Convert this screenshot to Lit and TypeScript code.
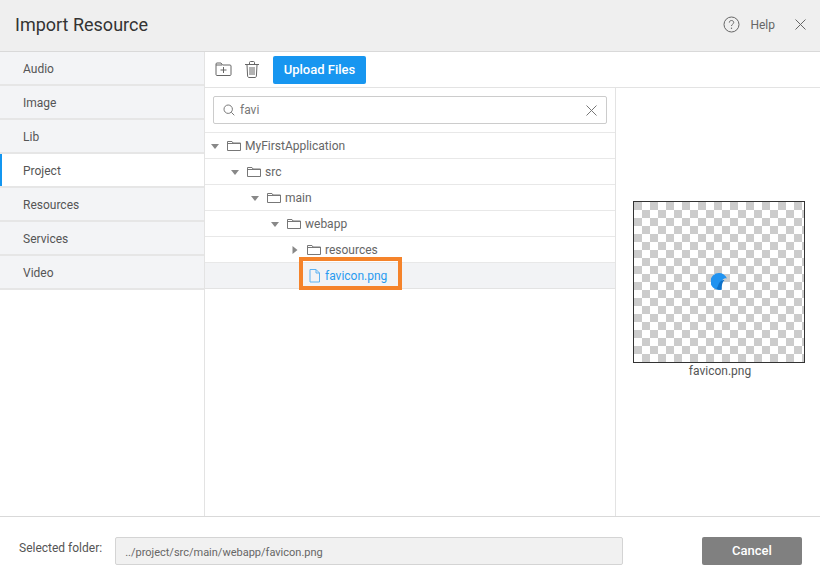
import { LitElement, html, css, svg } from 'lit'
import { customElement } from 'lit/decorators.js'

const TABS = ['Audio', 'Image', 'Lib', 'Project', 'Resources', 'Services', 'Video']

const TREE = [
  { label: 'MyFirstApplication', depth: 0, arrow: 'down' },
  { label: 'src', depth: 1, arrow: 'down' },
  { label: 'main', depth: 2, arrow: 'down' },
  { label: 'webapp', depth: 3, arrow: 'down' },
  { label: 'resources', depth: 4, arrow: 'right' },
]

const folderIcon = svg`<path d="M.5 10.500V1.500h4.500l1 1.500h7.500v7.500zM.5 3.500h13" fill="none" stroke="#777" stroke-width="1"/>`

@customElement('app-root')
export class AppRoot extends LitElement {
  static styles = css`
    :host {
      display: block;
      width: 820px;
      height: 580px;
      background: white;
      font-family: Roboto, sans-serif;
      color: #555;
      overflow: hidden;
    }

    .dialog {
      height: 580px;
      display: flex;
      flex-direction: column;
    }

    header {
      height: 49px;
      flex: none;
      background: #efefef;
      border-bottom: 1px solid #d9d9d9;
      display: flex;
      align-items: center;
      padding: 0 14px 2px 15px;
    }

    h1 {
      margin: 0;
      flex: 1;
      font-size: 18px;
      font-weight: 400;
      color: #333;
    }

    .help {
      font-size: 12px;
      color: #666;
      margin: 0 20px 0 10px;
    }

    svg {
      display: block;
      flex: none;
    }

    .body {
      flex: 1;
      display: flex;
      min-height: 0;
    }

    .side {
      width: 204px;
      flex: none;
      border-right: 1px solid #e3e3e3;
    }

    .tab {
      height: 32px;
      line-height: 34px;
      padding-left: 23px;
      font-size: 12px;
      color: #555;
      background: #f3f4f6;
      border-bottom: 2px solid #e6e6e6;
    }

    .tab.active {
      background: white;
      box-shadow: inset 2px 0 0 #1396f0;
    }

    .main {
      flex: 1;
      display: flex;
      flex-direction: column;
      min-width: 0;
    }

    .toolbar {
      height: 35px;
      flex: none;
      border-bottom: 1px solid #e3e3e3;
      display: flex;
      align-items: center;
      padding-left: 10px;
      gap: 13px;
    }

    .upload {
      width: 93px;
      height: 28px;
      margin-left: 1px;
      border: none;
      border-radius: 2px;
      background: #1796f0;
      color: white;
      font: 500 13px Roboto, sans-serif;
      padding: 0;
    }

    .panes {
      flex: 1;
      display: flex;
      min-height: 0;
    }

    .left {
      width: 410px;
      flex: none;
      border-right: 1px solid #e3e3e3;
    }

    .search {
      margin: 8px;
      height: 26px;
      border: 1px solid #ccc;
      border-radius: 2px;
      display: flex;
      align-items: center;
      padding: 0 9px;
      gap: 5px;
      font-size: 12px;
      color: #777;
    }

    .search span {
      flex: 1;
    }

    .row {
      position: relative;
      height: 25px;
      border-top: 1px solid #e8e8e8;
      display: flex;
      align-items: center;
      font-size: 12px;
      color: #666;
    }

    .row .arrow {
      margin-right: 8px;
    }

    .row .name {
      margin-left: 4px;
    }

    .row.selected {
      background: #f2f3f5;
      color: #2a9bf0;
      border-bottom: 1px solid #e3e3e3;
    }

    .row.selected .name {
      margin-left: 5px;
    }

    .marker {
      position: absolute;
      left: 94px;
      top: -6px;
      width: 95px;
      height: 25px;
      border: 4px solid #f5832a;
    }

    .preview {
      flex: 1;
      display: flex;
      flex-direction: column;
      align-items: center;
      padding: 113px 0 0 2px;
    }

    .image {
      width: 170px;
      height: 160px;
      border: 1px solid #333;
      display: flex;
      align-items: center;
      justify-content: center;
      background-color: white;
      background-image: conic-gradient(white 25%, #ccc 0 50%, white 0 75%, #ccc 0);
      background-size: 16px 16px;
    }

    .favicon {
      margin-top: -2px;
    }

    .caption {
      margin-top: 1px;
      padding-left: 2px;
      font-size: 12px;
      color: #555;
    }

    footer {
      height: 59px;
      flex: none;
      border-top: 1px solid #d9d9d9;
      display: flex;
      align-items: center;
      padding: 4px 18px 0 19px;
      font-size: 12px;
    }

    .path-label {
      color: #555;
      margin: -6px 13px 0 0;
    }

    .path {
      width: 497px;
      height: 26px;
      line-height: 29px;
      flex: none;
      background: #f1f1f1;
      border: 1px solid #d4d4d4;
      border-radius: 2px;
      padding-left: 9px;
      font-size: 11px;
      color: #666;
    }

    .cancel {
      width: 100px;
      height: 28px;
      margin-left: auto;
      border: none;
      border-radius: 2px;
      background: #808080;
      color: white;
      font: 500 13px Roboto, sans-serif;
      padding: 0;
    }
  `

  private arrow(dir: string) {
    const d = dir === 'down' ? 'M0 2h8l-4 5z' : 'M1.5 0l5 4-5 4z'
    return html`<svg class="arrow" width="8" height="8" viewBox="0 0 8 8"><path d=${d} fill="#888" /></svg>`
  }

  render() {
    return html`
      <div class="dialog">
        <header>
          <h1>Import Resource</h1>
          <svg width="17" height="17" viewBox="0 0 17 17">
            <circle cx="8.5" cy="8.5" r="7.5" fill="none" stroke="#666" />
            <path d="M6.3 6.6c0-1.3 1-2.1 2.2-2.1s2.2.8 2.2 2c0 1.700-2.200 1.700-2.200 3.500" fill="none" stroke="#666" />
            <circle cx="8.500" cy="12.300" r=".7" fill="#666" />
          </svg>
          <span class="help">Help</span>
          <svg width="11" height="11" viewBox="0 0 11 11"><path d="M.5.5l10 10M10.500.5l-10 10" stroke="#666" fill="none" /></svg>
        </header>
        <div class="body">
          <nav class="side">
            ${TABS.map(t => html`<div class="tab ${t === 'Project' ? 'active' : ''}">${t}</div>`)}
          </nav>
          <div class="main">
            <div class="toolbar">
              <svg width="17" height="15" viewBox="0 0 17 15">
                <path d="M1 3V2c0-.6.4-1 1-1h4l1.500 2H15c.6 0 1 .4 1 1v8.500c0 .6-.4 1-1 1H2c-.6 0-1-.4-1-1V3h6" fill="none" stroke="#666" />
                <path d="M5.500 8h6M8.500 5v6" fill="none" stroke="#666" />
              </svg>
              <svg width="14" height="17" viewBox="0 0 14 17">
                <path d="M0 3.500h14M4.500 3V1.500c0-.6.4-1 1-1h3c.6 0 1 .4 1 1V3M2 4l.6 11c0 .8.600 1.500 1.400 1.500h6c.8 0 1.400-.7 1.400-1.500L12 4M5 6v8M7 6v8M9 6v8" fill="none" stroke="#666" />
              </svg>
              <button class="upload">Upload Files</button>
            </div>
            <div class="panes">
              <div class="left">
                <div class="search">
                  <svg width="12" height="12" viewBox="0 0 12 12">
                    <circle cx="5.200" cy="5.200" r="4.200" fill="none" stroke="#777" />
                    <path d="M8.300 8.300l3 3" stroke="#777" fill="none" />
                  </svg>
                  <span>favi</span>
                  <svg width="11" height="11" viewBox="0 0 11 11"><path d="M.5.5l10 10M10.500.5l-10 10" stroke="#777" fill="none" /></svg>
                </div>
                ${TREE.map(n => html`
                  <div class="row" style="padding-left:${6 + n.depth * 20}px">
                    ${this.arrow(n.arrow)}
                    <svg width="14" height="12" viewBox="0 0 14 12">${folderIcon}</svg>
                    <span class="name">${n.label}</span>
                  </div>
                `)}
                <div class="row selected" style="padding-left:104px">
                  <svg width="11" height="14" viewBox="0 0 11 14">
                    <path d="M1 .5h6l3.500 3.500v9H1zM7 .5V4h3.500" fill="none" stroke="#5cb2f2" />
                  </svg>
                  <span class="name">favicon.png</span>
                  <div class="marker"></div>
                </div>
              </div>
              <div class="preview">
                <div class="image">
                  <svg class="favicon" width="16" height="17" viewBox="0 0 16 17">
                    <path d="M8 0c3.500 0 6.500 2 8 5.500-2.500-.7-4 .3-5 2.500-.8 1.800-1 4.500-.5 8.500-1 .4-1.800.5-2.500.5A8.300 8.300 0 0 1 8 0z" fill="#2193f0" />
                    <path d="M5.500 15.500c1.500-1.500 1.500-4 3-6C10 7.500 12 7 13.500 7c-2 1.500-3 5.500-3 9.500-2 .6-3.500.3-5-1z" fill="#0f72c9" />
                  </svg>
                </div>
                <div class="caption">favicon.png</div>
              </div>
            </div>
          </div>
        </div>
        <footer>
          <span class="path-label">Selected folder:</span>
          <div class="path">../project/src/main/webapp/favicon.png</div>
          <button class="cancel">Cancel</button>
        </footer>
      </div>
    `
  }
}

declare global {
  interface HTMLElementTagNameMap {
    'app-root': AppRoot
  }
}
